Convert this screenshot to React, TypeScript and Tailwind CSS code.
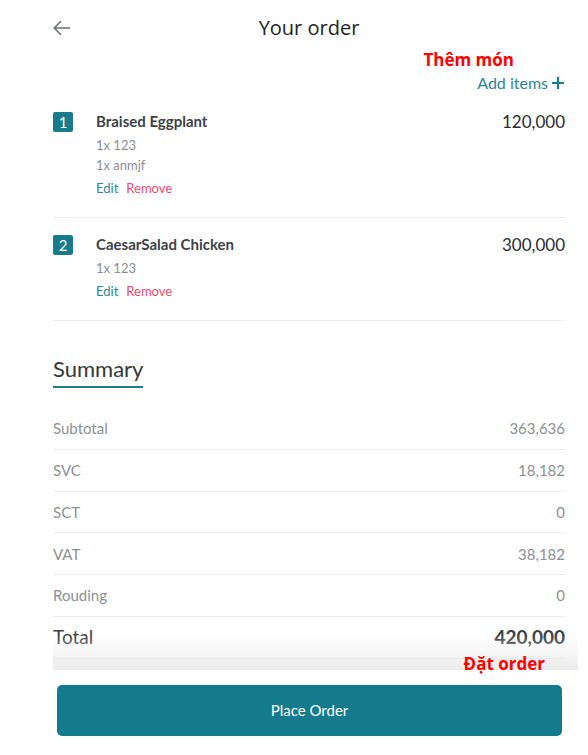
import React from "react";

type Item = {
  no: number;
  name: string;
  price: string;
  options: string[];
};

const items: Item[] = [
  { no: 1, name: "Braised Eggplant", price: "120,000", options: ["1x 123", "1x anmjf"] },
  { no: 2, name: "CaesarSalad Chicken", price: "300,000", options: ["1x 123"] },
];

const rows = [
  { label: "Subtotal", value: "363,636" },
  { label: "SVC", value: "18,182" },
  { label: "SCT", value: "0" },
  { label: "VAT", value: "38,182" },
  { label: "Rouding", value: "0" },
];

const App: React.FC = () => {
  return (
    <div
      className="w-[588px] h-[755px] bg-white overflow-hidden"
      style={{ fontFamily: "Lato, 'Open Sans', sans-serif" }}
    >
      <div className="ml-[53px] w-[512px]">
        {/* header */}
        <div className="relative flex items-center justify-center h-[56px]">
          <svg
            className="absolute left-0 top-[20px]"
            width="18"
            height="16"
            viewBox="0 0 18 16"
            fill="none"
            stroke="#6b6f75"
            strokeWidth="1.6"
          >
            <path d="M17 8H1.5M8 1.2L1.2 8L8 14.8" />
          </svg>
          <h1
            className="text-[20px] text-[#222] -mt-[1px]"
            style={{ fontFamily: "'Open Sans', sans-serif" }}
          >
            Your order
          </h1>
        </div>

        <div className="flex flex-col items-end -mt-[6px]">
          <div
            className="text-[17px] font-bold text-[#ff0000] leading-[20px] mr-[51px]"
            style={{ fontFamily: "'Open Sans', sans-serif" }}
          >
            Thêm món
          </div>
          <div className="flex items-center gap-[3px] mt-[3px] text-[16px] text-[#2a8796] leading-[20px]">
            Add items
            <svg width="14" height="14" viewBox="0 0 14 14" stroke="#177e8e" strokeWidth="2.2">
              <path d="M7 1v12M1 7h12" />
            </svg>
          </div>
        </div>

        {/* items */}
        <div className="mt-[15px]">
          {items.map((it) => (
            <div key={it.no} className="flex border-b border-[#ececec] pt-[3px] pb-[19px] mb-[13px]">
              <div className="w-[20px] h-[20px] rounded-[2px] bg-[#177b8b] text-white text-[15px] flex items-center justify-center mt-[1px]">
                {it.no}
              </div>
              <div className="ml-[23px] flex-1">
                <div className="text-[15px] font-bold text-[#3d4148] leading-[20px]">{it.name}</div>
                <div className="mt-[4px]">
                  {it.options.map((o) => (
                    <div key={o} className="text-[13px] text-[#8a8e93] leading-[20px]">
                      {o}
                    </div>
                  ))}
                </div>
                <div className="flex gap-[8px] mt-[3px] text-[13px] leading-[20px]">
                  <span className="text-[#2a8a9b]">Edit</span>
                  <span className="text-[#f2486e]">Remove</span>
                </div>
              </div>
              <div className="text-[17px] text-[#2a2d31] leading-[22px]">{it.price}</div>
            </div>
          ))}
        </div>

        {/* summary */}
        <div className="mt-[34px]">
          <div className="inline-block border-b-2 border-[#1b7f8f] pb-[3px]">
            <span className="text-[22px] text-[#33373c] leading-[28px]">Summary</span>
          </div>
          <div className="mt-[20px]">
            {rows.map((r) => (
              <div
                key={r.label}
                className="flex justify-between items-center h-[41.8px] border-b border-[#ececec] text-[15px] text-[#8c9095]"
              >
                <span>{r.label}</span>
                <span>{r.value}</span>
              </div>
            ))}
            <div className="relative flex justify-between items-center h-[41.8px] border-b border-[#e3e3e3] text-[19px] text-[#3a3f46]">
              <span>Total</span>
              <span className="font-bold">420,000</span>
            </div>
          </div>
        </div>
      </div>

      {/* footer */}
      <div className="relative -mt-[24px]">
        <div className="ml-[53px] w-[525px] h-[35px] bg-gradient-to-b from-[rgba(255,255,255,0)] to-[#ececec]" />
        <div
          className="absolute right-[43px] top-[19px] text-[17px] font-bold text-[#ff0000] leading-[20px]"
          style={{ fontFamily: "'Open Sans', sans-serif" }}
        >
          Đặt order
        </div>
        <div className="pt-[15px] pl-[57px] pr-[26px]">
          <button className="w-full h-[51px] rounded-[5px] bg-[#137b8d] text-white text-[15px]">
            Place Order
          </button>
        </div>
      </div>
    </div>
  );
};

export default App;
